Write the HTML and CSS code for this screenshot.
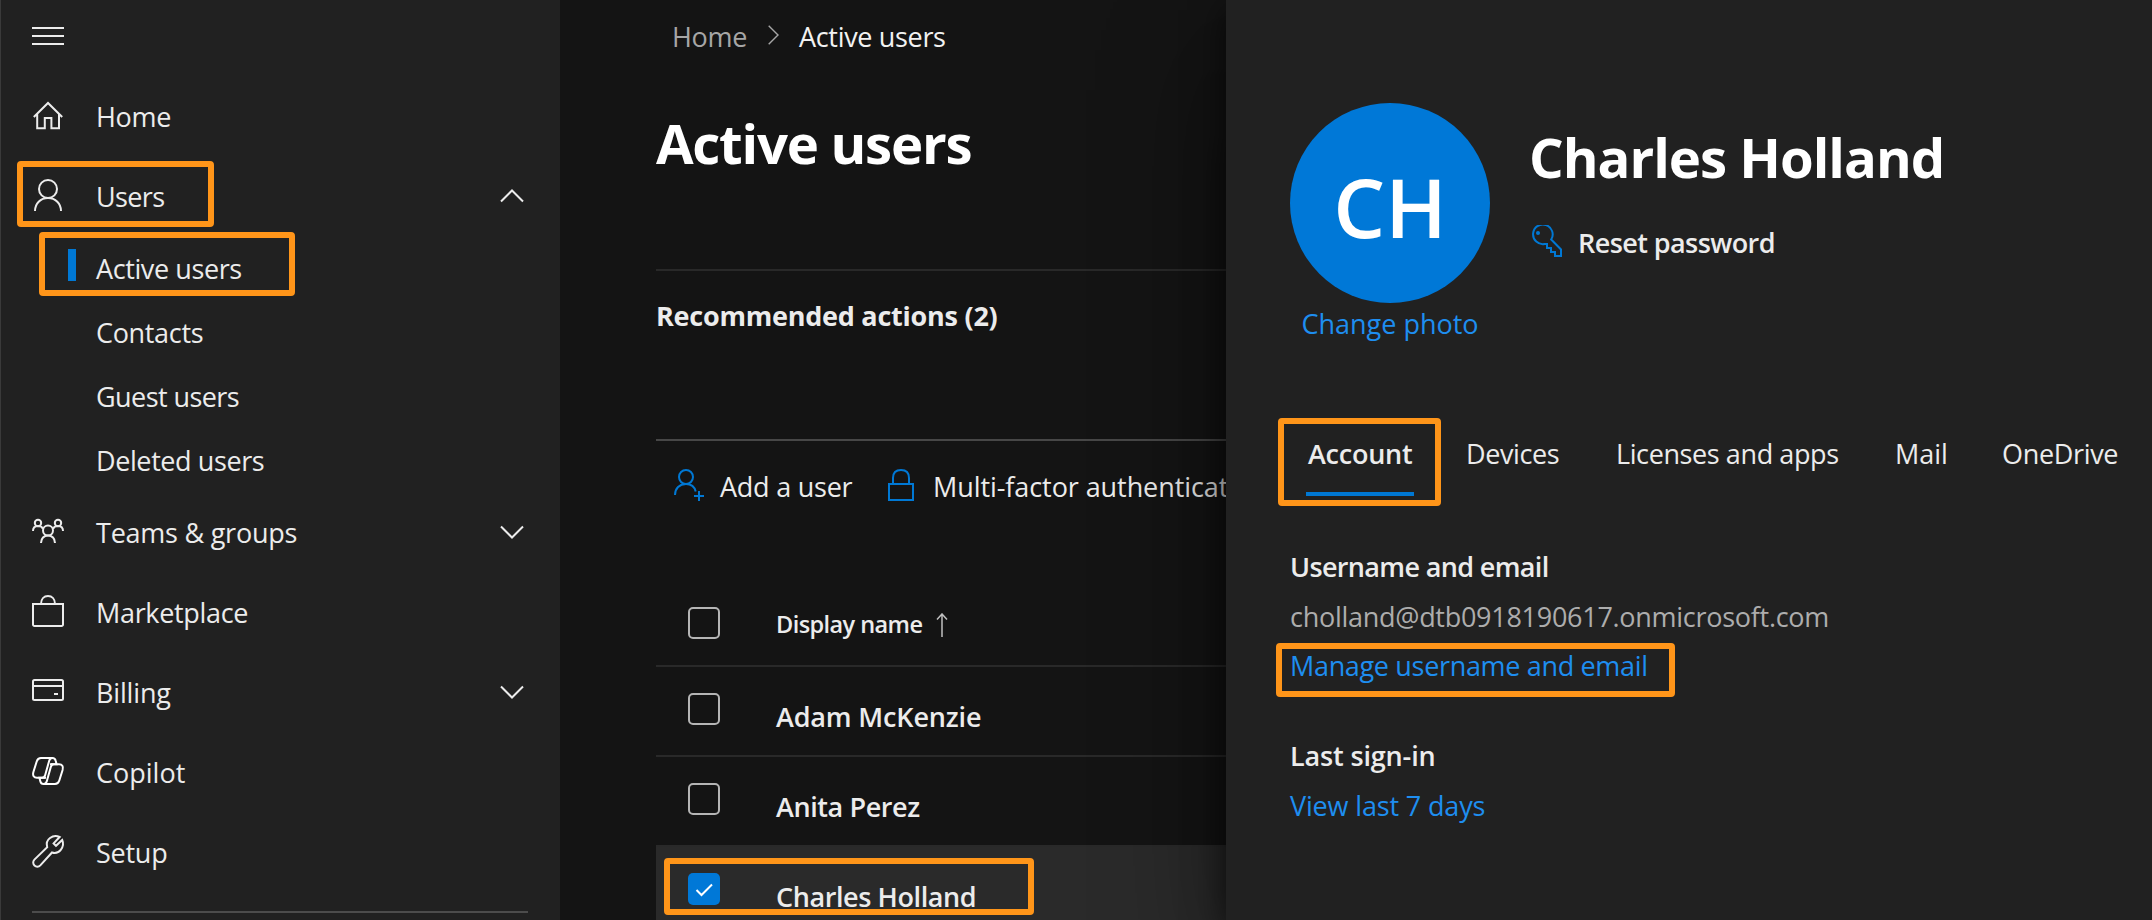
FILE: index.html
```html
<!DOCTYPE html>
<html lang="en">
<head>
<meta charset="utf-8">
<title>Active users - Microsoft 365 admin center</title>
<link rel="stylesheet" href="styles.css">
</head>
<body>
<div class="app">
  <nav class="sidebar">
    <button class="menu-toggle" aria-label="Collapse navigation"><span></span><span></span><span></span></button>
    <a class="nav-item">
      <svg class="icon" viewBox="0 0 32 32"><path d="M1.8 18 16 4l14.2 14M5.2 15v14.2h7.6V19h6.6v10.200h7.600V15"/></svg>
      <span class="label t-home">Home</span>
    </a>
    <a class="nav-item marked">
      <i class="callout callout-users"></i>
      <svg class="icon" viewBox="0 0 32 32"><circle cx="16" cy="10" r="9"/><path d="M3 32c0-7.500 5.500-13 13-13s13 5.500 13 13"/></svg>
      <span class="label t-users">Users</span>
      <svg class="chevron" viewBox="0 0 24 14"><path d="M1 12.500 12 1.500l11 11"/></svg>
    </a>
    <a class="nav-item sub marked">
      <i class="callout callout-active"></i>
      <i class="current-bar"></i>
      <span class="label t-active">Active users</span>
    </a>
    <a class="nav-item sub"><span class="label t-contacts">Contacts</span></a>
    <a class="nav-item sub"><span class="label t-guest">Guest users</span></a>
    <a class="nav-item sub"><span class="label t-deleted">Deleted users</span></a>
    <a class="nav-item">
      <svg class="icon" viewBox="0 0 32 32"><circle cx="6" cy="8" r="3.200"/><circle cx="26" cy="8" r="3.200"/><circle cx="16" cy="15.500" r="5"/><path d="M1 16c0-3 2-5 5-5 2.500 0 4.300 1 5 3M31 16c0-3-2-5-5-5-2.500 0-4.300 1-5 3M9 28c0-4.500 3-7.500 7-7.500s7 3 7 7.500"/></svg>
      <span class="label t-teams">Teams &amp; groups</span>
      <svg class="chevron" viewBox="0 0 24 14"><path d="M1 1.500l11 11 11-11"/></svg>
    </a>
    <a class="nav-item">
      <svg class="icon" viewBox="0 0 32 32"><path d="M1 9h30v20.500a1.500 1.500 0 0 1-1.500 1.500h-27A1.500 1.500 0 0 1 1 29.500zM9 9c0-5 3-8 7-8s7 3 7 8"/></svg>
      <span class="label t-market">Marketplace</span>
    </a>
    <a class="nav-item">
      <svg class="icon" viewBox="0 0 32 32"><rect x="1" y="5" width="30" height="20" rx="1.500"/><path d="M1 11h30M22 19h4"/></svg>
      <span class="label t-billing">Billing</span>
      <svg class="chevron" viewBox="0 0 24 14"><path d="M1 1.500l11 11 11-11"/></svg>
    </a>
    <a class="nav-item">
      <svg class="icon bright" viewBox="0 0 32 32">
        <path id="loop" d="M14 22.800H5C1.800 22.800.4 20.500 1.400 17L4.700 6.500C5.500 4 6.700 3 9 3h11.500c2 0 2.800 1.100 3.200 2.800L24.600 9.200H19M20.500 3c-2 0-2.800 1-3.300 2.700L13.200 20c-.5 1.800-1.500 2.800-3.200 2.800"/>
        <use href="#loop" transform="rotate(180 16 16)"/>
      </svg>
      <span class="label t-copilot">Copilot</span>
    </a>
    <a class="nav-item">
      <svg class="icon" viewBox="0 0 32 32"><path d="M27.600 2C21 -.8 12.800 4.200 15.200 12.200L2.400 24.600a4.100 4.100 0 0 0 5.900 5.800L20 17.500C27.500 19.800 33 11.500 30.200 5L24 10.800 21.600 8.400z"/></svg>
      <span class="label t-setup">Setup</span>
    </a>
    <hr class="nav-rule">
  </nav>

  <main class="main">
    <div class="breadcrumb">
      <span class="crumb t-crumb-home">Home</span>
      <svg class="crumb-sep" viewBox="0 0 11 20"><path d="M.7.700 10 10 .7 19.300"/></svg>
      <span class="t-crumb-active">Active users</span>
    </div>
    <h1 class="title"><span class="t-title">Active users</span></h1>
    <section class="recommended"><h2 class="t-rec">Recommended actions (2)</h2></section>
    <div class="commands">
      <svg class="cmd-icon add" viewBox="0 0 32 32"><circle cx="12" cy="8" r="7"/><path d="M1 26c0-6.500 4.500-11 11-11 5 0 8.500 2.500 9.700 7.500M25 22v10M20 27h10"/></svg>
      <span class="cmd-label t-add">Add a user</span>
      <svg class="cmd-icon lock" viewBox="0 0 26 32"><path d="M1 15h24v16H1zM5 15V9c0-5 3-8 8-8s8 3 8 8v6"/></svg>
      <span class="cmd-label t-mfa">Multi-factor authentication</span>
    </div>
    <div class="table">
      <div class="row head">
        <span class="check"></span>
        <span class="cell t-display">Display name</span>
        <svg class="sort" viewBox="0 0 12 24"><path d="M6 24V1M1 6.500l5-5.500 5 5.500"/></svg>
      </div>
      <div class="row"><span class="check"></span><span class="cell t-adam">Adam McKenzie</span></div>
      <div class="row"><span class="check"></span><span class="cell t-anita">Anita Perez</span></div>
      <div class="row selected">
        <span class="check on"><svg viewBox="0 0 32 32"><path d="M8.500 17l5 5L24 11.500"/></svg></span>
        <span class="cell t-charles">Charles Holland</span>
        <i class="callout callout-row"></i>
      </div>
    </div>
  </main>

  <aside class="panel">
    <header class="profile">
      <div class="photo">
        <div class="avatar"><span class="t-initials">CH</span></div>
        <a class="link t-change">Change photo</a>
      </div>
      <div class="identity">
        <h2 class="name"><span class="t-name">Charles Holland</span></h2>
        <div class="reset">
          <svg class="key" viewBox="0 0 32 32"><path d="M21.200 14.500 31 24.500V31h-6v-4h-4v-4h-4v-4h-2.500a9.800 9.800 0 1 1 6.700-4.500z"/><circle class="dot" cx="8" cy="8" r="2"/></svg>
          <span class="t-reset">Reset password</span>
        </div>
      </div>
    </header>
    <div class="tabs">
      <span class="tab active"><i class="callout callout-tab"></i><span class="t-account">Account</span></span>
      <span class="tab"><span class="t-devices">Devices</span></span>
      <span class="tab"><span class="t-licenses">Licenses and apps</span></span>
      <span class="tab"><span class="t-mail">Mail</span></span>
      <span class="tab"><span class="t-onedrive">OneDrive</span></span>
    </div>
    <section class="details">
      <h3><span class="t-username">Username and email</span></h3>
      <p><span class="t-email">cholland@dtb0918190617.onmicrosoft.com</span></p>
      <p class="marked"><i class="callout callout-manage"></i><a class="link t-manage">Manage username and email</a></p>
    </section>
    <section class="details signin">
      <h3><span class="t-last">Last sign-in</span></h3>
      <p><a class="link t-view">View last 7 days</a></p>
    </section>
  </aside>
</div>
</body>
</html>
```

FILE: styles.css
```css
* { box-sizing: border-box; margin: 0; padding: 0; }

body {
  width: 2152px;
  height: 920px;
  overflow: hidden;
  background: #141414;
  color: #ececec;
  font: 400 27px/36px "Open Sans", "Noto Sans", sans-serif;
}

span, a { white-space: nowrap; }
svg { display: block; flex: none; fill: none; stroke: currentColor; stroke-width: 2; }

.app { display: grid; grid-template-columns: 560px 666px 926px; height: 920px; overflow: hidden; }

/* Highlight frames */
.callout {
  position: absolute;
  border: 6px solid #ff9519;
  border-radius: 4px;
  pointer-events: none;
}
.marked { position: relative; }
.callout-users { left: 17px; top: 4px; width: 197px; height: 66px; }
.callout-active { left: 39px; top: -5px; width: 256px; height: 64px; }
.callout-row { left: 8px; top: 11px; width: 370px; height: 57px; }
.callout-tab { left: -28px; top: -18px; width: 163px; height: 88px; }
.callout-manage { left: -14px; top: 2px; width: 399px; height: 54px; }

/* Sidebar */
.sidebar { background: #212121; box-shadow: inset 1px 0 #3a3a3a; }
.menu-toggle {
  display: flex;
  flex-direction: column;
  gap: 6px;
  width: 64px;
  height: 77px;
  padding: 27px 0 0 32px;
  border: 0;
  background: none;
}
.menu-toggle span { height: 2px; background: #ececec; }
.nav-item { display: flex; align-items: center; height: 80px; padding: 0 36px 0 32px; }
.nav-item.sub { height: 64px; padding-left: 96px; }
.icon { width: 32px; height: 32px; margin: -4px 32px 0 0; overflow: visible; }
.icon.bright { color: #fff; }
.chevron { width: 24px; height: 14px; margin: -3px 0 0 auto; }
.current-bar { position: absolute; left: 68px; top: 12px; width: 8px; height: 32px; background: #0078d4; }
.nav-rule { margin: 18px 32px 0; border: 0; height: 2px; background: #4c4c4c; }

/* Main column */
.main { overflow: hidden; padding-left: 96px; }
.breadcrumb { display: flex; align-items: center; height: 73px; padding-left: 16px; color: #f2f2f2; }
.crumb { width: 80px; color: #a6a6a6; }
.crumb-sep { width: 11px; height: 20px; margin: -3px 20px 0 16px; stroke-width: 1.4; color: #a6a6a6; }
.title { height: 198px; border-bottom: 2px solid #292929; color: #fff; font-size: 54.500px; font-weight: 700; line-height: 140px; white-space: nowrap; }
.recommended { height: 170px; border-bottom: 2px solid #474747; }
.recommended h2 { font-size: 27px; font-weight: 700; line-height: 89px; white-space: nowrap; }
.commands { display: flex; align-items: center; height: 91px; margin-bottom: 49px; padding-left: 18px; }
.cmd-icon { height: 32px; margin-top: -3px; color: #0078d4; }
.cmd-label { flex: none; }
.add { width: 32px; margin-right: 14px; }
.lock { width: 26px; margin-right: 19px; }
.t-add { width: 168px; }

.row { position: relative; display: flex; height: 90px; padding-left: 32px; border-bottom: 2px solid #292929; }
.row.head { height: 86px; align-items: center; }
.check { flex: none; width: 32px; height: 32px; margin: 26px 56px 0 0; border: 2px solid #b5b5b5; border-radius: 5px; }
.head .check { margin-top: 0; }
.check.on { border: 0; background: #0078d7; color: #fff; }
.cell { font-weight: 600; line-height: 99px; }
.head .cell { width: 160px; padding-top: 2px; font-size: 23.500px; line-height: 82px; }
.sort { width: 12px; height: 24px; margin-top: 3px; stroke-width: 1.500; color: #c0c0c0; }
.selected { background: #2a2a2a; }

/* Details panel */
.panel {
  position: relative;
  padding: 103px 0 0 64px;
  background: #212121;
  box-shadow: 0 50px 115px rgba(0, 0, 0, .45), 0 10px 32px rgba(0, 0, 0, .6);
}
.profile { display: flex; gap: 40px; height: 311px; }
.photo { width: 200px; }
.avatar {
  height: 200px;
  border-radius: 50%;
  background: #0078d7;
  color: #fff;
  font-size: 82px;
  font-weight: 600;
  line-height: 206px;
  text-align: center;
}
.photo .link { display: block; margin-top: 2px; text-align: center; line-height: 37px; }
.link { color: #1e8ef0; }
.name { height: 108px; margin-left: -1px; color: #fff; font-size: 54.500px; font-weight: 700; line-height: 108px; white-space: nowrap; }
.reset { display: flex; align-items: center; font-weight: 600; line-height: 61px; }
.reset span { padding-top: 1px; }
.key { width: 32px; height: 32px; margin: -3px 16px 0 0; color: #0078d4; }
.key .dot { fill: currentColor; stroke: none; }

.tabs { display: flex; padding: 22px 0 0 16px; height: 128px; }
.tab { position: relative; height: 60px; }
.tab.active { width: 108px; margin-right: 52px; padding-left: 2px; border-bottom: 4px solid #0078d4; font-weight: 600; }
.tab:nth-child(2) { width: 150px; }
.tab:nth-child(3) { width: 279px; }
.tab:nth-child(4) { width: 107px; }

.details h3 { font-size: 27px; font-weight: 600; line-height: 50px; }
.details p { line-height: 49px; color: #adadad; }
.signin { padding-top: 41px; }

/* Tracking */
.t-mfa { letter-spacing: -.08px; }
.t-billing, .t-adam, .t-view, .t-last { letter-spacing: -.15px; }
.t-teams, .t-setup, .t-rec, .t-add, .t-account { letter-spacing: -.24px; }
.t-email { letter-spacing: -.28px; }
.t-home, .t-contacts, .t-market, .t-crumb-home, .t-crumb-active, .t-manage, .t-onedrive { letter-spacing: -.33px; }
.t-active, .t-deleted, .t-anita, .t-charles, .t-devices, .t-licenses { letter-spacing: -.4px; }
.t-guest, .t-display, .t-reset { letter-spacing: -.57px; }
.t-users, .t-username { letter-spacing: -.65px; }
.t-name { letter-spacing: -1px; }
.t-title { letter-spacing: -1.250px; }
```
